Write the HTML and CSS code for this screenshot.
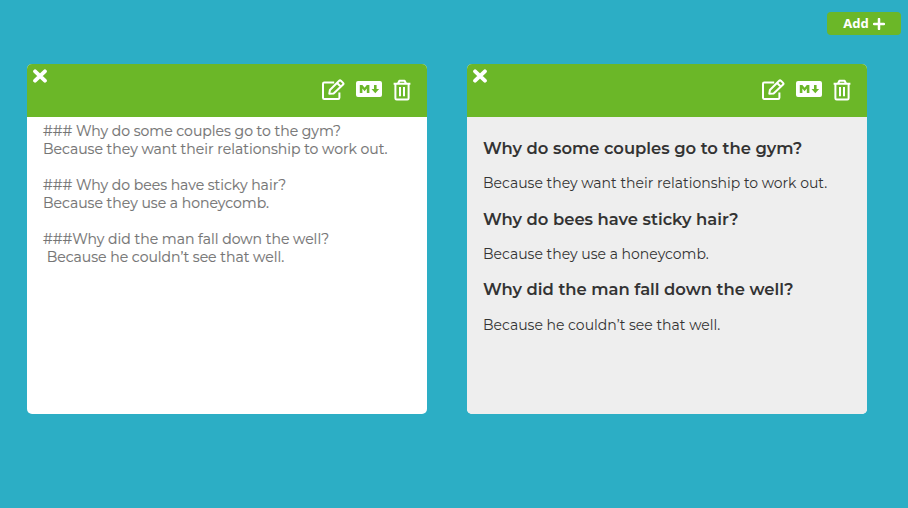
FILE: index.html
```html
<!DOCTYPE html>
<html lang="en">
<head>
<meta charset="utf-8">
<title>Notes</title>
<link rel="stylesheet" href="styles.css">
</head>
<body>
<svg class="symbols" aria-hidden="true">
  <symbol id="edit" viewBox="0 0 24 22"><path d="M13.2 3.6H3.2Q2 3.6 2 4.8V18.8Q2 20 3.2 20H17.2Q18.4 20 18.4 18.8V13.4M8.3 14.7L8.9 11L18.2 1.8Q19 1 19.9 1.8L22.1 3.9Q22.9 4.7 22.1 5.6L12.6 14.5ZM16.1 4L19.9 7.8"/></symbol>
  <symbol id="markdown" viewBox="0 0 26 16"><path fill-rule="evenodd" d="M2 0H24Q26 0 26 2V14Q26 16 24 16H2Q0 16 0 14V2Q0 0 2 0ZM3.8 12H6.4V7.5L8.6 10.3L10.8 7.5V12H13.4V4H10.8L8.6 6.8L6.4 4H3.8ZM18 4V8H15.5L19.3 12.2L23.1 8H20.6V4Z"/></symbol>
  <symbol id="trash" viewBox="0 0 18 22"><path d="M0.6 4.8H17.4M5 4.5L6.4 1.7H11.6L13 4.5M2.4 5V19.2Q2.4 20.4 3.6 20.4H14.4Q15.6 20.4 15.6 19.2V5M7 7.9V17.3M11 7.9V17.3"/></symbol>
  <symbol id="close" viewBox="0 0 14 14"><path d="M2.1 2.3L11.9 11.7M11.9 2.3L2.1 11.7"/></symbol>
</svg>
<div class="toolbar"><button class="add">Add <svg class="plus" viewBox="0 0 12 12"><path d="M6 1V11M1 6H11"/></svg></button></div>
<main class="notes">
  <section class="note">
    <header class="bar">
      <svg class="close"><use href="#close"/></svg>
      <div class="actions"><svg class="edit"><use href="#edit"/></svg><svg class="markdown"><use href="#markdown"/></svg><svg class="trash"><use href="#trash"/></svg></div>
    </header>
    <div class="source">### Why do some couples go to the gym?
Because they want their relationship to work out.

### Why do bees have sticky hair?
Because they use a honeycomb.

###Why did the man fall down the well?
 Because he couldn’t see that well.</div>
  </section>
  <section class="note">
    <header class="bar">
      <svg class="close"><use href="#close"/></svg>
      <div class="actions"><svg class="edit"><use href="#edit"/></svg><svg class="markdown"><use href="#markdown"/></svg><svg class="trash"><use href="#trash"/></svg></div>
    </header>
    <div class="preview">
      <h3>Why do some couples go to the gym?</h3>
      <p>Because they want their relationship to work out.</p>
      <h3>Why do bees have sticky hair?</h3>
      <p>Because they use a honeycomb.</p>
      <h3>Why did the man fall down the well?</h3>
      <p>Because he couldn’t see that well.</p>
    </div>
  </section>
</main>
</body>
</html>
```
FILE: styles.css
```css
* { box-sizing: border-box; }
body { margin: 0; height: 508px; overflow: hidden; background: #2caec5; font-family: Montserrat, Inter, sans-serif; }
.symbols { position: absolute; width: 0; height: 0; }
svg { display: block; fill: none; stroke: #fff; stroke-width: 2; stroke-linejoin: round; }
.toolbar { display: flex; justify-content: flex-end; height: 64px; padding: 12px 7px 0 0; }
.add { display: flex; align-items: center; justify-content: center; gap: 4px; width: 74px; height: 23px; padding: 0; border: 0; border-radius: 4px; background: #6bb728; color: #fff; font: 700 13px/23px "Noto Sans", sans-serif; }
.plus { width: 12px; height: 12px; stroke-width: 2.5; stroke-linecap: round; }
.notes { display: flex; gap: 40px; padding-left: 27px; }
.note { width: 400px; height: 350px; border-radius: 5px; overflow: hidden; background: #fff; }
.bar { display: flex; justify-content: space-between; height: 53px; padding: 5px 16px 0 6px; background: #6bb728; }
.close { width: 14px; height: 14px; stroke-width: 3.9; stroke-linecap: round; }
.actions { display: flex; align-items: flex-start; height: 42px; padding-top: 10px; }
.edit { width: 24px; height: 22px; }
.markdown { width: 26px; height: 16px; margin: 2px 11px 0; fill: #fff; stroke: none; }
.trash { width: 18px; height: 22px; }
.source { padding: 5px 16px; font-size: 14.03px; line-height: 18px; white-space: pre; color: #757575; -webkit-text-stroke: 0.15px #757575; }
.preview { height: 297px; padding: 21px 16px; background: #eee; color: #333; }
h3, p { margin: 0; white-space: nowrap; }
h3 { height: 35.2px; font-size: 16.4px; font-weight: 600; line-height: 20px; }
p { height: 35.5px; font-size: 14px; line-height: 20px; }
p:last-child { padding-top: 0.6px; }
```
